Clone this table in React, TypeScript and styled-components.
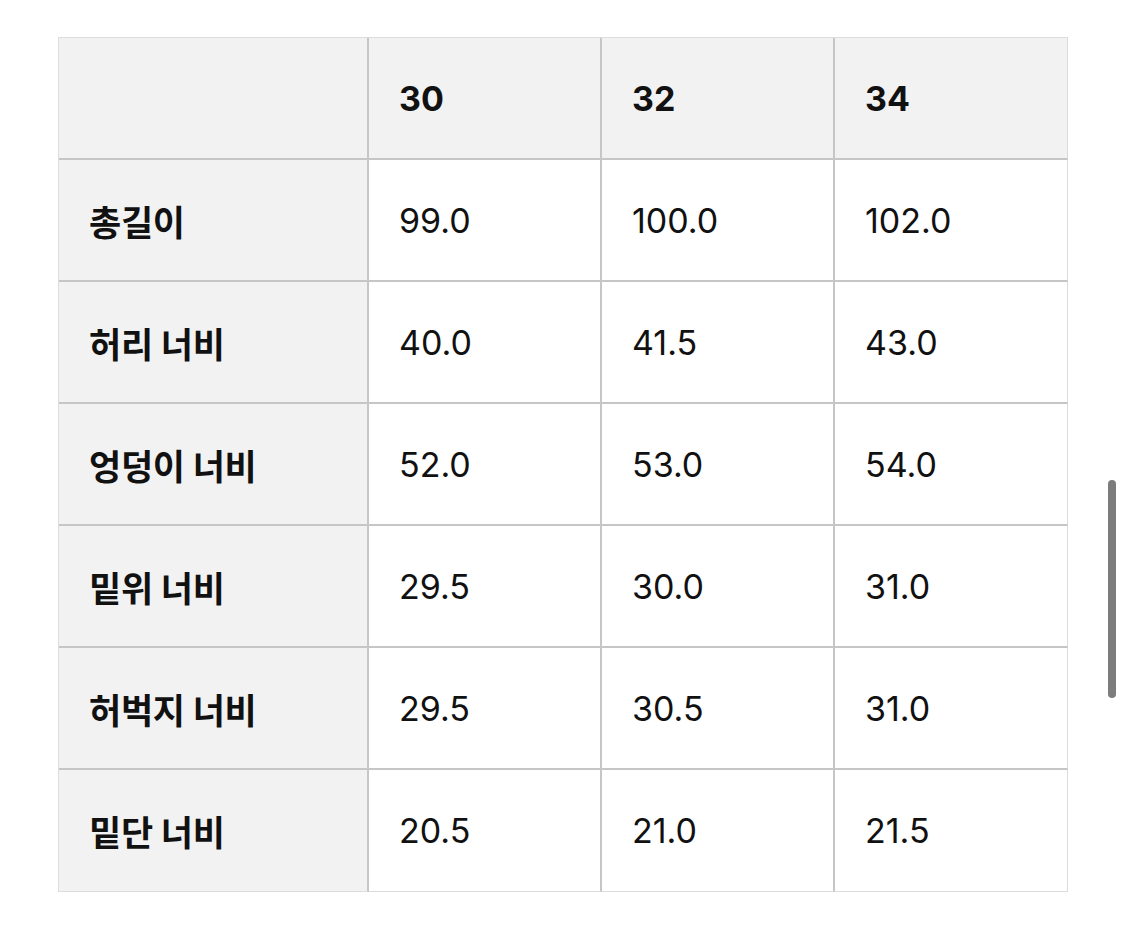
import React from "react";
import styled, { createGlobalStyle } from "styled-components";

const Global = createGlobalStyle`
  html, body { margin: 0; padding: 0; background: #ffffff; }
  body { font-family: Inter, "Noto Sans CJK KR", "Noto Sans", sans-serif; color: #111; }
`;

const Page = styled.div`
  position: relative;
  width: 1125px;
  height: 948px;
  padding: 37px 0 0 58px;
  box-sizing: border-box;
`;

const Grid = styled.div`
  display: grid;
  grid-template-columns: 310px 233px 233px 233px;
  grid-auto-rows: 122px;
  width: 1010px;
  box-sizing: border-box;
  border-top: 1px solid #dcdcdc;
  border-left: 1px solid #dcdcdc;
`;

const Cell = styled.div<{ $shade?: boolean; $bold?: boolean; $lastCol?: boolean; $lastRow?: boolean; $ko?: boolean }>`
  display: flex;
  align-items: center;
  box-sizing: border-box;
  padding-left: 30px;
  background: ${(p) => (p.$shade ? "#f2f2f2" : "#ffffff")};
  border-right: ${(p) => (p.$lastCol ? "1px solid #dcdcdc" : "2px solid #c6c6c6")};
  border-bottom: ${(p) => (p.$lastRow ? "1px solid #dcdcdc" : "2px solid #c6c6c6")};
  font-size: ${(p) => (p.$ko ? "35px" : "34px")};
  font-weight: ${(p) => (p.$bold ? 700 : 400)};
  letter-spacing: ${(p) => (p.$ko ? "-0.3px" : "0")};
  color: #111;
  white-space: nowrap;
`;

const Scrollbar = styled.div`
  position: absolute;
  left: 1108px;
  top: 480px;
  width: 8px;
  height: 218px;
  border-radius: 4px;
  background: #7c7c7c;
`;

const sizes = ["30", "32", "34"];
const rows: [string, string[]][] = [
  ["총길이", ["99.0", "100.0", "102.0"]],
  ["허리 너비", ["40.0", "41.5", "43.0"]],
  ["엉덩이 너비", ["52.0", "53.0", "54.0"]],
  ["밑위 너비", ["29.5", "30.0", "31.0"]],
  ["허벅지 너비", ["29.5", "30.5", "31.0"]],
  ["밑단 너비", ["20.5", "21.0", "21.5"]],
];

export default function App() {
  return (
    <>
      <Global />
      <Page>
        <Grid>
          <Cell $shade />
          {sizes.map((s, i) => (
            <Cell key={s} $shade $bold $lastCol={i === sizes.length - 1}>
              {s}
            </Cell>
          ))}
          {rows.map(([label, vals], r) => {
            const last = r === rows.length - 1;
            return (
              <React.Fragment key={label}>
                <Cell $shade $bold $ko $lastRow={last}>
                  {label}
                </Cell>
                {vals.map((v, i) => (
                  <Cell key={i} $lastCol={i === vals.length - 1} $lastRow={last}>
                    {v}
                  </Cell>
                ))}
              </React.Fragment>
            );
          })}
        </Grid>
        <Scrollbar />
      </Page>
    </>
  );
}
